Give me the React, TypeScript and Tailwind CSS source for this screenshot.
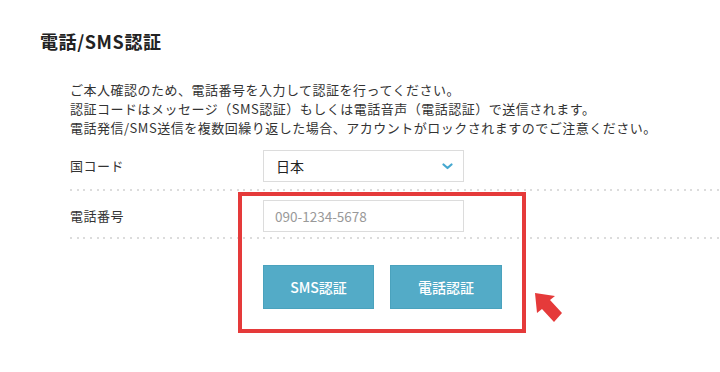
import React from "react";

const dotted =
  "h-[2px] w-full bg-[repeating-linear-gradient(to_right,#dcdcdc_0_2px,transparent_2px_6.67px)]";

export default function App() {
  return (
    <div
      className="relative w-[720px] h-[372px] bg-white overflow-hidden text-[#333]"
      style={{ fontFamily: '"Noto Sans CJK JP", "Noto Sans", sans-serif' }}
    >
      <h1 className="pl-[40px] pt-[28px] text-[18px] leading-[27px] font-bold tracking-[0.6px] text-[#222]">
        電話/SMS認証
      </h1>
      <div className="pl-[70px] mt-[25px] text-[13px] leading-[19px] tracking-[0.5px]">
        <p>ご本人確認のため、電話番号を入力して認証を行ってください。</p>
        <p>認証コードはメッセージ（SMS認証）もしくは電話音声（電話認証）で送信されます。</p>
        <p>電話発信/SMS送信を複数回繰り返した場合、アカウントがロックされますのでご注意ください。</p>
      </div>
      <div className="pl-[70px] mt-[13px]">
        <div className="flex items-center">
          <div className="w-[193px] text-[13px] tracking-[0.5px]">国コード</div>
          <div className="w-[201px] h-[32px] border border-[#dcdcdc] flex items-center justify-between pl-[12px] pr-[10px] text-[14px] text-[#222]">
            <span>日本</span>
            <svg width="11" height="7" viewBox="0 0 11 7">
              <path d="M1.5 1.5 L5.5 5 L9.5 1.5" fill="none" stroke="#45a8d0" strokeWidth="2.2" strokeLinecap="round" strokeLinejoin="round" />
            </svg>
          </div>
        </div>
        <div className={`${dotted} mt-[7px]`} />
        <div className="flex items-center mt-[9px]">
          <div className="w-[193px] text-[13px] tracking-[0.5px]">電話番号</div>
          <div className="w-[201px] h-[32px] border border-[#dcdcdc] flex items-center pl-[11px] text-[13.5px] text-[#999]">
            090-1234-5678
          </div>
        </div>
        <div className={`${dotted} mt-[5px]`} />
        <div className="flex mt-[26px] pl-[193px] gap-[16px]">
          <button className="w-[111px] h-[44px] bg-[#53abc7] border border-[#4aa2bd] text-white text-[14px] font-medium">
            SMS認証
          </button>
          <button className="w-[112px] h-[44px] bg-[#53abc7] border border-[#4aa2bd] text-white text-[14px] font-medium">
            電話認証
          </button>
        </div>
      </div>
      <div className="absolute left-[238px] top-[192px] w-[288px] h-[141px] border-[4px] border-[#e53a3a]" />
      <svg className="absolute left-[530px] top-[288px]" width="36" height="38" viewBox="0 0 36 38">
        <polygon points="5,5 25,8 20,12 32,25 24,34 12,21 7,25" fill="#e53a3a" />
      </svg>
    </div>
  );
}
